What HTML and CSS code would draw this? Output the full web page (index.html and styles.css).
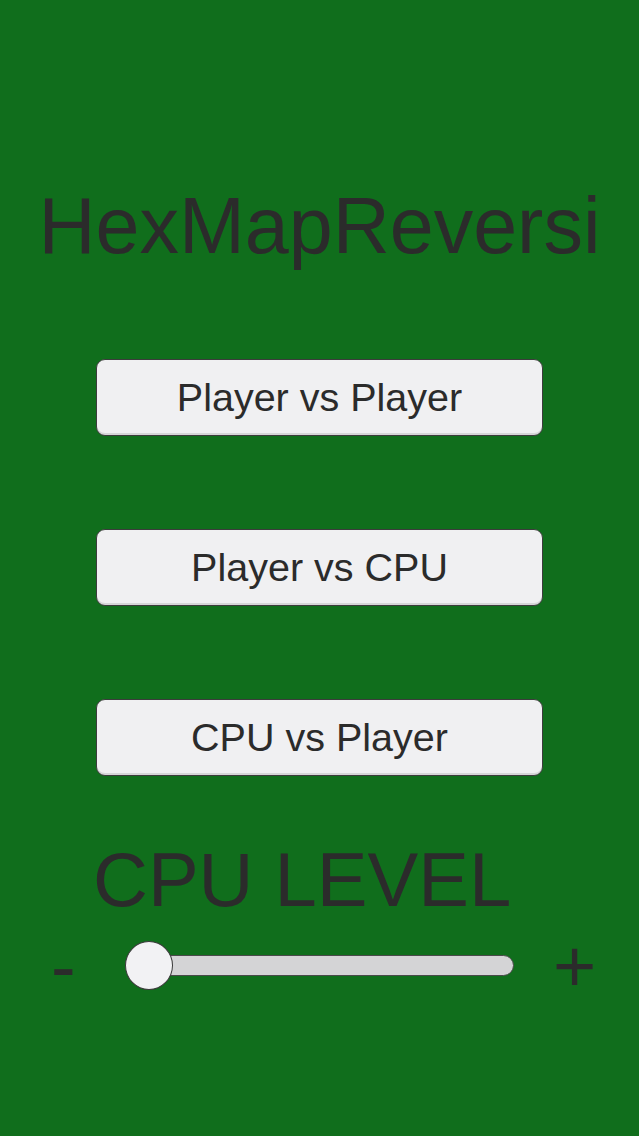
FILE: index.html
```html
<!DOCTYPE html>
<html lang="en">
<head>
    <meta charset="UTF-8">
    <meta name="viewport" content="width=device-width, initial-scale=1.0">
    <title>HexMapReversi</title>
    <link rel="stylesheet" href="styles.css">
</head>
<body>
    <main class="menu">
        <h1 class="title">HexMapReversi</h1>

        <div class="modes">
            <button type="button" class="mode-btn">Player vs Player</button>
            <button type="button" class="mode-btn">Player vs CPU</button>
            <button type="button" class="mode-btn">CPU vs Player</button>
        </div>

        <section class="level">
            <h2 class="level-label">CPU LEVEL</h2>
            <div class="slider-row">
                <span class="step step-minus">-</span>
                <div class="track">
                    <div class="thumb"></div>
                </div>
                <span class="step step-plus">+</span>
            </div>
        </section>
    </main>
</body>
</html>
```

FILE: styles.css
```css
/* Page */
body {
    margin: 0;
    min-height: 1136px;
    background-color: #106e1c;
    color: #2b2b2b;
    font-family: "Liberation Sans", Arial, sans-serif;
}

.menu {
    display: flex;
    flex-direction: column;
    align-items: center;
    padding-top: 181px;
}

/* Title */
.title {
    margin: 0;
    font-size: 79px;
    font-weight: 400;
    line-height: 90px;
}

/* Game mode buttons */
.modes {
    display: flex;
    flex-direction: column;
    gap: 93px;
    margin-top: 88px;
}

.mode-btn {
    box-sizing: border-box;
    width: 447px;
    height: 77px;
    padding: 0;
    background-color: #f0f0f2;
    border: 1px solid #3c3c3c;
    border-radius: 9px;
    box-shadow: inset 0 -2px 0 #d6d6d8;
    color: #2b2b2b;
    font-family: inherit;
    font-size: 39.5px;
    cursor: pointer;
}

/* CPU level */
.level {
    align-self: stretch;
    margin-top: 61px;
}

.level-label {
    margin: 0;
    padding-left: 93px;
    font-size: 76px;
    font-weight: 400;
    line-height: 86px;
}

.slider-row {
    display: flex;
    align-items: center;
    height: 72px;
    margin-top: 6px;
    padding-left: 51px;
}

.step {
    font-size: 74px;
    line-height: 72px;
    margin-top: 4px;
}
.step-minus {
    width: 74px;
}
.step-plus {
    margin-left: 39px;
}

.track {
    position: relative;
    box-sizing: border-box;
    width: 389px;
    height: 21px;
    background-color: #d4d4d6;
    border: 1px solid #4a4a4a;
    border-radius: 11px;
}

.thumb {
    position: absolute;
    left: -1px;
    top: 50%;
    box-sizing: border-box;
    width: 48px;
    height: 49px;
    margin-top: -24px;
    background-color: #f2f2f4;
    border: 1px solid #3a3a3a;
    border-radius: 50%;
}
```
